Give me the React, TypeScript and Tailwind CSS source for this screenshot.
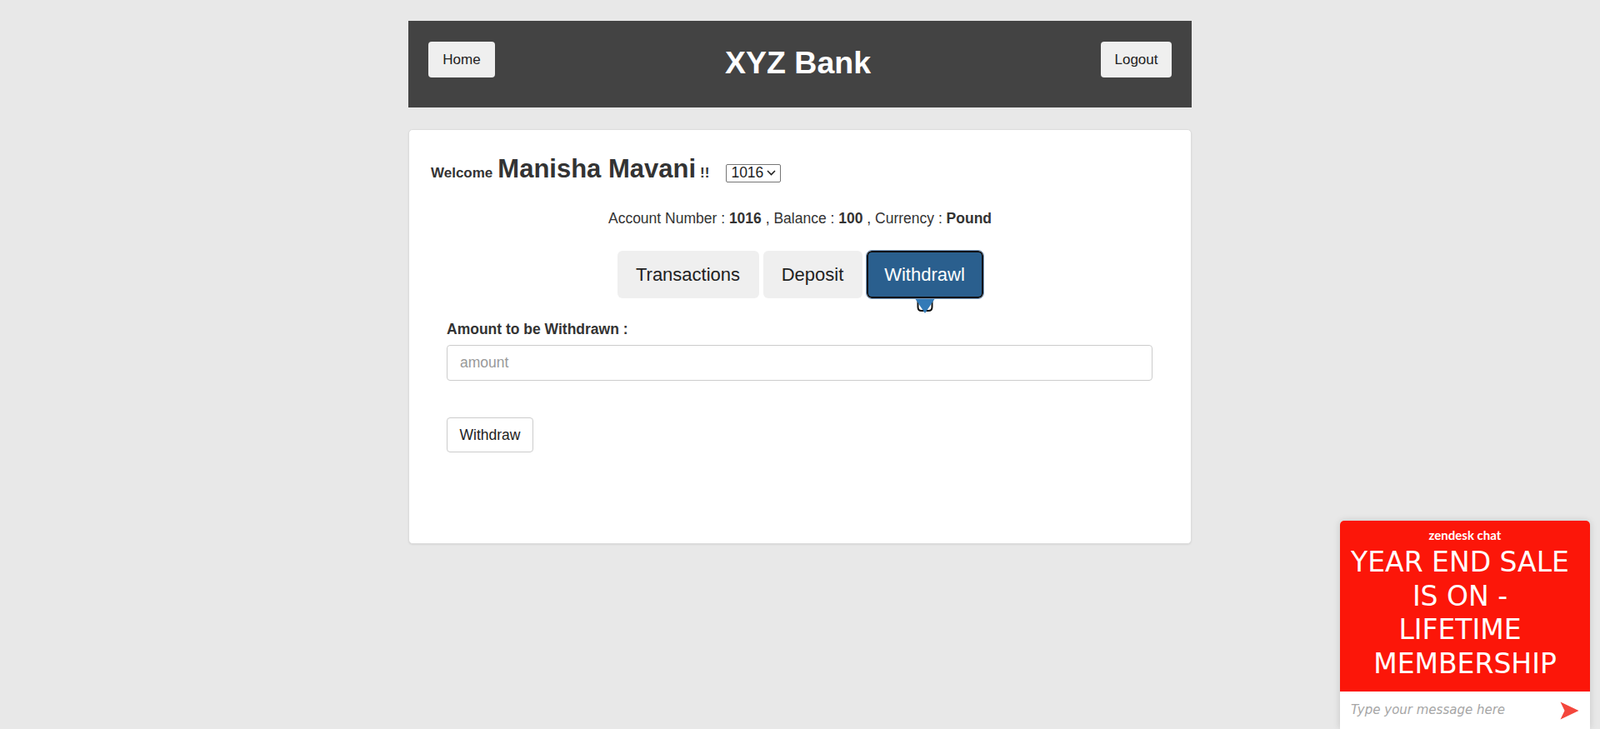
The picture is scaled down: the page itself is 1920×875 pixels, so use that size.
import React from "react";

export default function App() {
  return (
    <div className="min-h-[875px] w-full bg-[#e8e8e8] text-[#333] font-['Liberation_Sans',Arial,sans-serif]">
      <div className="mx-auto w-[940px] pt-[25px]">
        {/* Header */}
        <div className="flex h-[104px] items-start justify-between bg-[#434343] px-6 pt-[25px]">
          <button className="h-[43px] w-[80px] rounded-[4px] bg-[#efefef] text-[17px] text-[#222]">
            Home
          </button>
          <h1 className="mt-[7px] text-[37.5px] font-bold leading-none text-white">XYZ Bank</h1>
          <button className="h-[43px] w-[85px] rounded-[4px] bg-[#efefef] text-[17px] text-[#222]">
            Logout
          </button>
        </div>

        {/* Card */}
        <div className="relative mt-[26px] h-[498px] rounded-[5px] border border-[#dcdcdc] bg-white px-[26px] pt-[31px] shadow-[0_1px_2px_rgba(0,0,0,0.08)]">
          <div className="flex h-[32px] items-baseline">
            <span className="text-[17px] font-bold leading-none">Welcome</span>
            <span className="ml-[6px] text-[31px] font-bold leading-none">Manisha Mavani</span>
            <span className="ml-[5px] text-[17px] font-bold leading-none">!!</span>
            <span className="ml-[20px] flex h-[22px] w-[66px] items-center rounded-[2px] border border-[#767676] bg-white pl-[5px] text-[17.5px] leading-none text-[#222]">
              1016
              <svg className="ml-[4px]" width="11" height="7" viewBox="0 0 11 7">
                <path d="M1 1l4.5 4.5L10 1" fill="none" stroke="#222" strokeWidth="1.6" />
              </svg>
            </span>
          </div>

          <div className="mt-[33px] text-center text-[17.5px] leading-[20px]">
            Account Number : <b>1016</b> , Balance : <b>100</b> , Currency : <b>Pound</b>
          </div>

          <div className="relative mt-[29px] flex justify-center gap-[5px]">
            <button className="h-[57px] w-[170px] rounded-[6px] bg-[#efefef] text-[22px] text-[#222]">
              Transactions
            </button>
            <button className="h-[57px] w-[119px] rounded-[6px] bg-[#efefef] text-[22px] text-[#222]">
              Deposit
            </button>
            <button className="relative h-[57px] w-[140px] rounded-[6px] border-2 border-[#111] bg-[#2a5f8e] text-[22px] text-white outline outline-1 outline-[#7d9cbf]">
              Withdrawl
              <svg
                className="absolute left-1/2 top-[55px] -translate-x-1/2"
                width="26"
                height="19"
                viewBox="0 0 26 19"
              >
                <path
                  d="M4.5 3v7.5c0 3 1.5 4.5 4.5 4.5h8c3 0 4.5-1.5 4.5-4.5V3"
                  fill="none"
                  stroke="#111"
                  strokeWidth="2"
                />
                <path d="M1.5 1h23L13 18z" fill="#337ab7" />
              </svg>
            </button>
          </div>

          <div className="ml-[19px] mr-[20px] mt-[27px]">
            <div className="text-[17.5px] font-bold leading-[20px]">Amount to be Withdrawn :</div>
            <input
              className="mt-[9px] block h-[43px] w-full rounded-[4px] border border-[#ccc] pl-[15px] text-[17.5px] text-[#333] outline-none placeholder:text-[#999]"
              placeholder="amount"
            />
            <button className="mt-[44px] h-[42px] w-[104px] rounded-[4px] border border-[#ccc] bg-white text-[17.5px] text-[#222]">
              Withdraw
            </button>
          </div>
        </div>
      </div>

      {/* Zendesk widget */}
      <div className="fixed bottom-0 right-[12px] w-[300px] overflow-hidden rounded-t-[5px] shadow-[0_0_8px_rgba(0,0,0,0.15)]">
        <div className="h-[205px] bg-[#fc1609] pt-[8px] text-center text-white">
          <div className="text-[15px] font-bold leading-[18px] font-['Lato','Noto_Sans',sans-serif]">
            zendesk chat
          </div>
          <div className="mt-[4px] text-[33px] leading-[40.5px] font-['DejaVu_Sans',Verdana,sans-serif]">
            <div className="pr-[12px]">YEAR END SALE</div>
            <div className="pr-[12px]">IS ON -</div>
            <div className="pr-[12px]">LIFETIME</div>
            <div>MEMBERSHIP</div>
          </div>
        </div>
        <div className="flex h-[45px] items-center justify-between bg-white pl-[13px] pr-[13px]">
          <span className="text-[15px] italic text-[#a6a6a6] font-['DejaVu_Sans',Verdana,sans-serif]">
            Type your message here
          </span>
          <svg width="23" height="22" viewBox="0 0 23 22">
            <path d="M0.5 0.5L22.5 11L0.5 21.5L5.5 11Z" fill="#f4463c" />
          </svg>
        </div>
      </div>
    </div>
  );
}
